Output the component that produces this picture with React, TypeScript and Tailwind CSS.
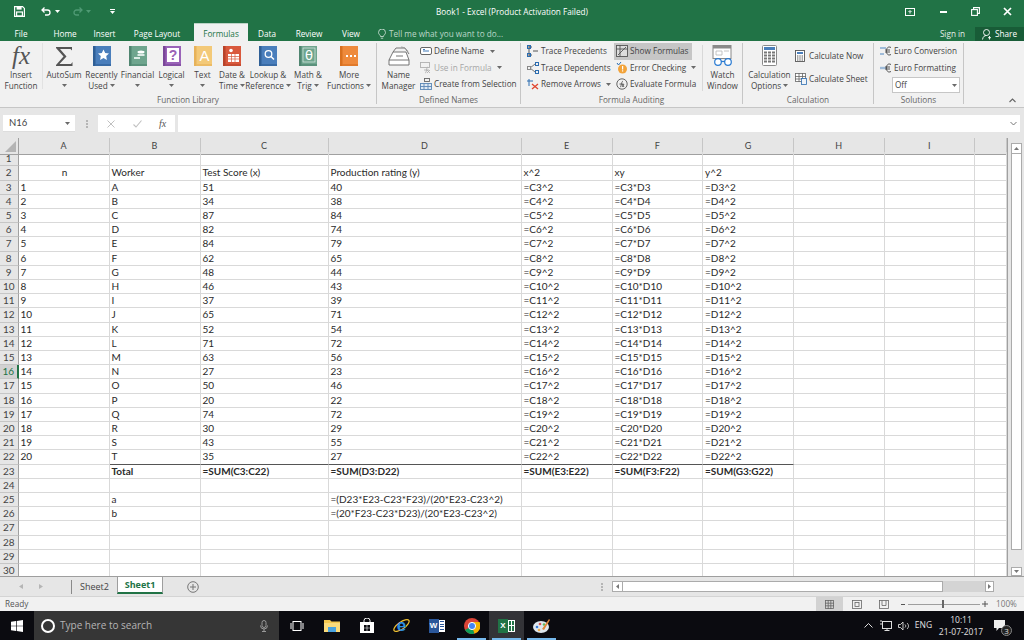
import React from "react";

const scores = [51, 34, 87, 82, 84, 62, 48, 46, 37, 65, 52, 71, 63, 27, 50, 20, 74, 30, 43, 35];
const ratings = [40, 38, 84, 74, 79, 65, 44, 43, 39, 71, 54, 72, 56, 23, 46, 22, 72, 29, 55, 27];
const columns = ["A", "B", "C", "D", "E", "F", "G", "H", "I", ""];

function cellsForRow(r: number): string[] {
  const blank = ["", "", "", "", "", "", "", "", "", ""];
  if (r === 2) return ["n", "Worker", "Test Score (x)", "Production rating (y)", "x^2", "xy", "y^2", "", "", ""];
  if (r >= 3 && r <= 22) {
    const i = r - 3;
    return [
      String(i + 1),
      String.fromCharCode(65 + i),
      String(scores[i]),
      String(ratings[i]),
      `=C${r}^2`,
      `=C${r}*D${r}`,
      `=D${r}^2`,
      "",
      "",
      "",
    ];
  }
  if (r === 23) return ["", "Total", "=SUM(C3:C22)", "=SUM(D3:D22)", "=SUM(E3:E22)", "=SUM(F3:F22)", "=SUM(G3:G22)", "", "", ""];
  if (r === 25) return ["", "a", "", "=(D23*E23-C23*F23)/(20*E23-C23^2)", "", "", "", "", "", ""];
  if (r === 26) return ["", "b", "", "=(20*F23-C23*D23)/(20*E23-C23^2)", "", "", "", "", "", ""];
  return blank;
}

function Caret({ className = "" }: { className?: string }) {
  return (
    <svg width="5" height="3" viewBox="0 0 5 3" className={`inline-block shrink-0 ${className}`}>
      <path d="M0 0h5L2.5 3z" fill="#6a6a6a" />
    </svg>
  );
}

function Book({ color, spine, children }: { color: string; spine: string; children?: React.ReactNode }) {
  return (
    <svg width="18" height="20" viewBox="0 0 18 20">
      <rect x="0" y="0" width="18" height="20" fill={color} />
      <rect x="0" y="0" width="2.5" height="20" fill={spine} />
      <rect x="2.5" y="18" width="15.5" height="2" fill={spine} opacity="0.6" />
      {children}
    </svg>
  );
}

function LargeBtn({
  icon,
  line1,
  line2,
  caret,
  className,
}: {
  icon: React.ReactNode;
  line1: string;
  line2?: string;
  caret?: boolean;
  className: string;
}) {
  return (
    <div className={`flex flex-col items-center shrink-0 ${className}`}>
      <div className="h-[26px] flex items-center justify-center">{icon}</div>
      <div className="h-[11px] leading-[11px] whitespace-nowrap">{line1}</div>
      <div className="h-[11px] leading-[11px] whitespace-nowrap flex items-center gap-[2px]">
        {line2 ? <span>{line2}</span> : null}
        {caret ? <Caret /> : null}
      </div>
    </div>
  );
}

function SmallBtn({
  icon,
  label,
  caret,
  dim,
  className = "",
}: {
  icon: React.ReactNode;
  label: string;
  caret?: boolean;
  dim?: boolean;
  className?: string;
}) {
  return (
    <div className={`h-[16.5px] flex items-center whitespace-nowrap ${dim ? "text-[#a6a6a6]" : ""} ${className}`}>
      <span className="w-[14px] h-[12px] flex items-center justify-start shrink-0">{icon}</span>
      <span>{label}</span>
      {caret ? <Caret className="ml-[5px]" /> : null}
    </div>
  );
}

function Group({ label, className, children }: { label: string; className: string; children: React.ReactNode }) {
  return (
    <div className={`flex flex-col shrink-0 border-r border-[#c6c6c6] ${className}`}>
      <div className="h-[52px] flex">{children}</div>
      <div className="h-[9px] leading-[9px] text-center text-[#666666]">{label}</div>
    </div>
  );
}

const Ic = {
  trace: (
    <svg width="12" height="12" viewBox="0 0 12 12" fill="none" stroke="#2b6cb0" strokeWidth="1">
      <path d="M2 1v10M2 2h3M2 10h3M6 6h5" stroke="#555" />
      <rect x="0.5" y="0.5" width="3" height="3" />
      <rect x="0.5" y="8.5" width="3" height="3" />
    </svg>
  ),
  dep: (
    <svg width="12" height="12" viewBox="0 0 12 12" fill="none" stroke="#2b6cb0" strokeWidth="1">
      <path d="M3 6l5-4M3 6l5 4" stroke="#777" />
      <rect x="0.5" y="4.5" width="3" height="3" stroke="#888" />
      <rect x="8.5" y="0.5" width="3" height="3" />
      <rect x="8.5" y="8.5" width="3" height="3" />
    </svg>
  ),
  remove: (
    <svg width="12" height="12" viewBox="0 0 12 12" fill="none" stroke="#2b6cb0" strokeWidth="1">
      <path d="M2 1v7M0 3h6" />
      <path d="M5 6l6 5M11 6l-6 5" stroke="#e0452f" strokeWidth="1.3" />
    </svg>
  ),
  show: (
    <svg width="12" height="12" viewBox="0 0 12 12" fill="none" stroke="#555" strokeWidth="0.9">
      <rect x="0.5" y="0.5" width="11" height="11" fill="#ddd" />
      <path d="M0 4h12M4 0v12M2 10l8-8" />
    </svg>
  ),
  error: (
    <svg width="12" height="12" viewBox="0 0 12 12">
      <path d="M1 1l1.5 2L5 0" fill="none" stroke="#2b6cb0" strokeWidth="1" />
      <circle cx="6.5" cy="7" r="4.5" fill="#f2a33a" />
      <rect x="6" y="4" width="1.2" height="3.5" fill="#fff" />
      <rect x="6" y="8.3" width="1.2" height="1.2" fill="#fff" />
    </svg>
  ),
  evalF: (
    <svg width="12" height="12" viewBox="0 0 12 12" fill="none" stroke="#555" strokeWidth="0.9">
      <circle cx="6" cy="6" r="5.2" />
      <path d="M4 9c1.5 0 1-5 3-6M3.5 6h4M6 6l2 3M8 6l-2 3" />
    </svg>
  ),
  define: (
    <svg width="12" height="10" viewBox="0 0 12 10" fill="none" stroke="#555" strokeWidth="0.9">
      <rect x="0.5" y="1.5" width="11" height="7" rx="1.5" fill="#fff" />
      <path d="M3 5h6M3 3.5h2" stroke="#2b6cb0" />
    </svg>
  ),
  use: (
    <svg width="12" height="12" viewBox="0 0 12 12" fill="none" stroke="#b0b0b0" strokeWidth="0.9">
      <rect x="0.5" y="0.5" width="9" height="5" />
      <path d="M5 11c2 0 1-6 3-6M4 8h5M7 8l3 3M10 8l-3 3" />
    </svg>
  ),
  create: (
    <svg width="12" height="12" viewBox="0 0 12 12" fill="none" stroke="#5b87b5" strokeWidth="0.9">
      <rect x="0.5" y="5.5" width="11" height="6" fill="#dfe9f3" />
      <path d="M4 5.5v6M8 5.5v6M0 8.5h12" />
      <rect x="4.5" y="0.5" width="5" height="3" stroke="#666" />
    </svg>
  ),
  calcNow: (
    <svg width="10" height="12" viewBox="0 0 10 12" fill="none" stroke="#555" strokeWidth="0.9">
      <rect x="0.5" y="0.5" width="9" height="11" fill="#fff" />
      <rect x="2" y="2" width="6" height="2" fill="#4a7ebb" stroke="none" />
      <path d="M2 6h1.4M4.3 6h1.4M6.6 6h1.4M2 8h1.4M4.3 8h1.4M6.6 8h1.4M2 10h1.4M4.3 10h1.4M6.6 10h1.4" strokeWidth="1.2" />
    </svg>
  ),
  calcSheet: (
    <svg width="12" height="12" viewBox="0 0 12 12" fill="none" stroke="#666" strokeWidth="0.8">
      <rect x="0.5" y="0.5" width="10" height="8" fill="#fff" />
      <path d="M0 3.5h11M0 6h11M4 0v9M7.5 0v9" />
      <rect x="6.5" y="5.5" width="5" height="6" fill="#eef3f8" stroke="#2b6cb0" />
    </svg>
  ),
  euroA: (
    <svg width="12" height="12" viewBox="0 0 12 12" fill="none" strokeWidth="1">
      <path d="M0 3h6" stroke="#9fbbd8" strokeWidth="2" />
      <path d="M0 9h4" stroke="#9fbbd8" strokeWidth="2" />
      <path d="M11 2.5C8 1 6.5 3 6.5 6s1.5 5 4.5 3.5M5 5h5M5 7h5" stroke="#555" />
    </svg>
  ),
  euroB: (
    <svg width="12" height="12" viewBox="0 0 12 12" fill="none" strokeWidth="1">
      <path d="M0 6h7" stroke="#9fbbd8" strokeWidth="2.4" />
      <path d="M11 2.5C8 1 6.5 3 6.5 6s1.5 5 4.5 3.5M5 5h5M5 7h5" stroke="#555" />
    </svg>
  ),
};

function TitleBar() {
  return (
    <div className="h-[23px] shrink-0 bg-[#217346] grid grid-cols-[1fr_auto_1fr] items-center text-white">
      <div className="flex items-center">
        <span className="w-[38px] flex justify-center">
          <svg width="11" height="11" viewBox="0 0 11 11" fill="none" stroke="#fff" strokeWidth="1.2">
            <path d="M.6.6h8l1.8 1.8v8H.6z" />
            <rect x="2.6" y="1" width="5" height="2.6" fill="#fff" stroke="none" />
            <rect x="2.6" y="6" width="5.8" height="4" />
          </svg>
        </span>
        <span className="w-[28px] flex items-center justify-center gap-[3px] ml-[-2px]">
          <svg width="11" height="9" viewBox="0 0 11 9" fill="none" stroke="#fff" strokeWidth="1.3">
            <path d="M3.5.5L1 3l2.5 2.5M1 3h5.5a2.5 2.5 0 010 5H4" />
          </svg>
          <svg width="5" height="3" viewBox="0 0 5 3"><path d="M0 0h5L2.5 3z" fill="#fff" /></svg>
        </span>
        <span className="w-[34px] flex items-center justify-center gap-[3px]">
          <svg width="11" height="9" viewBox="0 0 11 9" fill="none" stroke="#4f9a74" strokeWidth="1.3">
            <path d="M7.5.5L10 3 7.5 5.5M10 3H4.5a2.5 2.5 0 000 5H7" />
          </svg>
          <svg width="5" height="3" viewBox="0 0 5 3"><path d="M0 0h5L2.5 3z" fill="#4f9a74" /></svg>
        </span>
        <span className="w-[28px] flex flex-col items-center gap-[1px]">
          <span className="w-[5px] h-[1px] bg-white" />
          <svg width="5" height="3" viewBox="0 0 5 3"><path d="M0 0h5L2.5 3z" fill="#fff" /></svg>
        </span>
      </div>
      <div className="text-[8.2px] leading-[23px] font-['Open_Sans',sans-serif]">Book1 - Excel (Product Activation Failed)</div>
      <div className="flex items-center justify-end">
        <span className="w-[32px] flex justify-center">
          <svg width="10" height="8" viewBox="0 0 10 8" fill="none" stroke="#fff" strokeWidth="1">
            <rect x="0.5" y="0.5" width="9" height="7" />
            <path d="M5 5.5V3M3.5 4L5 2.5 6.5 4" />
          </svg>
        </span>
        <span className="w-[34px] flex justify-center">
          <span className="w-[7px] h-[2px] bg-white" />
        </span>
        <span className="w-[31px] flex justify-center">
          <svg width="9" height="9" viewBox="0 0 9 9" fill="none" stroke="#fff" strokeWidth="1.1">
            <rect x="0.6" y="2.6" width="5.8" height="5.8" />
            <path d="M2.6 2.5V.6h5.8v5.8H6.5" />
          </svg>
        </span>
        <span className="w-[33px] flex justify-center">
          <svg width="9" height="9" viewBox="0 0 9 9" stroke="#fff" strokeWidth="1.7">
            <path d="M1 1l7 7M8 1L1 8" />
          </svg>
        </span>
      </div>
    </div>
  );
}

function TabRow() {
  const tabs: [string, string][] = [
    ["Home", "w-[46px]"],
    ["Insert", "w-[33px]"],
    ["Page Layout", "w-[72px]"],
  ];
  return (
    <div className="h-[18px] shrink-0 bg-[#217346] flex items-end text-white text-[8.2px] font-['Open_Sans',sans-serif]">
      <div className="w-[42px] h-[14px] leading-[14px] text-center">File</div>
      {tabs.map(([t, w]) => (
        <div key={t} className={`${w} h-[14px] leading-[14px] text-center`}>{t}</div>
      ))}
      <div className="w-[54px] h-[18px] leading-[19px] pt-[0px] text-center bg-[#f1f1f1] text-[#217346] ml-[1px] border-t border-[#bcd3c6]">Formulas</div>
      <div className="w-[38px] h-[14px] leading-[14px] text-center">Data</div>
      <div className="w-[46px] h-[14px] leading-[14px] text-center">Review</div>
      <div className="w-[38px] h-[14px] leading-[14px] text-center">View</div>
      <div className="h-[14px] leading-[14px] flex items-center gap-[3px] text-[#bcd7c8] ml-[8px]">
        <svg width="8" height="10" viewBox="0 0 8 10" fill="none" stroke="#d7e7de" strokeWidth="0.8">
          <path d="M2.5 7.5C2.5 6 .5 5.500 .5 3.500a3.500 3.500 0 017 0C7.500 5.500 5.500 6 5.500 7.500zM2.800 9.200h2.400" />
        </svg>
        <span>Tell me what you want to do...</span>
      </div>
      <div className="ml-auto h-[14px] leading-[14px] w-[45px] text-center text-[#e4efe9]">Sign in</div>
      <div className="h-[14px] leading-[14px] w-[49px] bg-[#185c37] flex items-center justify-center gap-[3px]">
        <svg width="10" height="11" viewBox="0 0 10 11" fill="none" stroke="#fff" strokeWidth="0.9">
          <circle cx="4.500" cy="3.500" r="3" />
          <path d="M.5 10.500c.5-3 2-4 4-4M7.500 7v3.500M6 8.700h3" />
        </svg>
        <span>Share</span>
      </div>
    </div>
  );
}

function Ribbon() {
  return (
    <div className="h-[67px] shrink-0 bg-[#f1f1f1] border-b border-[#c6c6c6] flex pt-[2px] text-[8.2px] text-[#444444] font-['Open_Sans',sans-serif]">
      <Group label="Function Library" className="w-[377px] h-[61px]">
        <LargeBtn
          className="w-[43px] border-r border-[#e2e2e2] h-[46px]"
          icon={<span className="text-[25px] leading-[26px] italic text-[#555555] font-['Liberation_Serif',serif]">fx</span>}
          line1="Insert"
          line2="Function"
        />
        <LargeBtn
          className="w-[38px] ml-[2px]"
          icon={
            <svg width="18" height="21" viewBox="0 0 18 21">
              <path d="M1 1h16v3.500L15.500 3H5l6.500 7.500L4.500 18H16l1.500-2v4H1v-1l7.500-8.500L1 2z" fill="#555555" />
            </svg>
          }
          line1="AutoSum"
          caret
        />
        <LargeBtn
          className="w-[37px]"
          icon={
            <Book color="#4a7ebb" spine="#2f5f96">
              <rect x="5" y="3" width="11" height="11" fill="#4a7ebb" />
              <path d="M10.500 3.500l1.700 3.500 3.800.5-2.800 2.600.7 3.800-3.400-1.900-3.400 1.900.7-3.800-2.800-2.600 3.800-.5z" fill="#fff" />
            </Book>
          }
          line1="Recently"
          line2="Used"
          caret
        />
        <LargeBtn
          className="w-[35px]"
          icon={
            <Book color="#6fa58e" spine="#4f8570">
              <ellipse cx="12" cy="6" rx="3.500" ry="1.500" fill="#fff" />
              <rect x="8.500" y="8" width="7" height="2" fill="#dcebe5" />
              <rect x="5" y="11" width="6" height="2" fill="#dcebe5" />
            </Book>
          }
          line1="Financial"
          caret
        />
        <LargeBtn
          className="w-[33px]"
          icon={
            <Book color="#9a63b8" spine="#7a4698">
              <rect x="4" y="2" width="12" height="14" fill="#fff" />
              <text x="10" y="14" fontSize="14" fontWeight="700" textAnchor="middle" fill="#9a63b8" fontFamily="Liberation Sans, sans-serif">?</text>
            </Book>
          }
          line1="Logical"
          caret
        />
        <LargeBtn
          className="w-[29px]"
          icon={
            <Book color="#f3c978" spine="#e7b259">
              <text x="10.500" y="15" fontSize="15" textAnchor="middle" fill="#fff" fontFamily="Liberation Sans, sans-serif">A</text>
            </Book>
          }
          line1="Text"
          caret
        />
        <LargeBtn
          className="w-[30px]"
          icon={
            <Book color="#d9593d" spine="#b8432a">
              <rect x="5" y="8" width="11" height="8" fill="#fff" />
              <path d="M5 10.500h11M5 13h11M8.500 8v8M12 8v8" stroke="#d9593d" strokeWidth="0.7" />
              <circle cx="8" cy="4.500" r="1.800" fill="#fff" />
            </Book>
          }
          line1="Date &"
          line2="Time"
          caret
        />
        <LargeBtn
          className="w-[42px]"
          icon={
            <Book color="#4a7ebb" spine="#2f5f96">
              <circle cx="9.500" cy="8" r="3.300" fill="none" stroke="#fff" strokeWidth="1.300" />
              <path d="M12 10.500l3 3" stroke="#fff" strokeWidth="1.500" />
            </Book>
          }
          line1="Lookup &"
          line2="Reference"
          caret
        />
        <LargeBtn
          className="w-[38px]"
          icon={
            <Book color="#6fa58e" spine="#4f8570">
              <rect x="4" y="2" width="12" height="14" fill="none" stroke="#dcebe5" strokeWidth="0.7" />
              <text x="10" y="14" fontSize="13" textAnchor="middle" fill="#fff" fontFamily="DejaVu Sans, sans-serif">θ</text>
            </Book>
          }
          line1="Math &"
          line2="Trig"
          caret
        />
        <LargeBtn
          className="w-[44px]"
          icon={
            <Book color="#ee8a3c" spine="#d8701f">
              <rect x="6" y="9" width="2" height="2" fill="#fff" />
              <rect x="10" y="9" width="2" height="2" fill="#fff" />
              <rect x="14" y="9" width="2" height="2" fill="#fff" />
            </Book>
          }
          line1="More"
          line2="Functions"
          caret
        />
      </Group>
      <Group label="Defined Names" className="w-[144px] h-[61px]">
        <LargeBtn
          className="w-[41px] ml-[1px]"
          icon={
            <svg width="22" height="20" viewBox="0 0 22 20" fill="none" stroke="#666" strokeWidth="0.9">
              <path d="M1 14l4-8h13l3 8v5H1z" fill="#fff" />
              <path d="M1 14h20" />
              <path d="M5 6l3-4h9l4 6M8 10h7" />
              <path d="M13 1c3 0 6 2 7 5" stroke="#999" />
            </svg>
          }
          line1="Name"
          line2="Manager"
        />
        <div className="flex flex-col ml-[1px]">
          <SmallBtn icon={Ic.define} label="Define Name" caret className="[&>svg]:ml-[6px]" />
          <SmallBtn icon={Ic.use} label="Use in Formula" dim caret />
          <SmallBtn icon={Ic.create} label="Create from Selection" />
        </div>
      </Group>
      <Group label="Formula Auditing" className="w-[222px] h-[61px]">
        <div className="w-[93px] flex flex-col pl-[6px]">
          <SmallBtn icon={Ic.trace} label="Trace Precedents" />
          <SmallBtn icon={Ic.dep} label="Trace Dependents" />
          <SmallBtn icon={Ic.remove} label="Remove Arrows" caret />
        </div>
        <div className="w-[88px] flex flex-col">
          <SmallBtn icon={Ic.show} label="Show Formulas" className="bg-[#c6c6c6] w-[78px] pl-[2px]" />
          <SmallBtn icon={Ic.error} label="Error Checking" caret className="pl-[2px]" />
          <SmallBtn icon={Ic.evalF} label="Evaluate Formula" className="pl-[2px]" />
        </div>
        <LargeBtn
          className="w-[40px] border-l border-[#d8d8d8] h-[46px] mt-[2px]"
          icon={
            <svg width="22" height="22" viewBox="0 0 22 22" fill="none" className="mt-[-2px]">
              <rect x="1" y="0.500" width="18" height="13" fill="#fff" stroke="#8a8a8a" />
              <rect x="1" y="0.500" width="18" height="3" fill="#8a8a8a" />
              <path d="M4 6h6v4H4zM12 6h5" stroke="#b5b5b5" strokeWidth="0.8" />
              <circle cx="6" cy="17" r="3.300" fill="#fff" stroke="#2b7cd3" strokeWidth="1.200" />
              <circle cx="16" cy="17" r="3.300" fill="#fff" stroke="#2b7cd3" strokeWidth="1.200" />
              <path d="M9 16.500h4" stroke="#2b7cd3" strokeWidth="1.200" />
            </svg>
          }
          line1="Watch"
          line2="Window"
        />
      </Group>
      <Group label="Calculation" className="w-[131px] h-[61px]">
        <LargeBtn
          className="w-[45px] ml-[4px]"
          icon={
            <svg width="15" height="21" viewBox="0 0 15 21" fill="none" className="mt-[-1px]">
              <rect x="0.500" y="0.500" width="14" height="20" rx="1" fill="#fff" stroke="#8a8a8a" />
              <rect x="2" y="2" width="11" height="3" fill="#4a7ebb" />
              <path d="M2 7.500h3M6 7.500h3M10 7.500h3M2 10.500h3M6 10.500h3M10 10.500h3M2 13.500h3M6 13.500h3M10 13.500h3M2 16.500h3M6 16.500h3M10 16.500h3" stroke="#777" strokeWidth="2" />
            </svg>
          }
          line1="Calculation"
          line2="Options"
          caret
        />
        <div className="flex flex-col ml-[3px] pt-[5px] gap-[6px]">
          <SmallBtn icon={Ic.calcNow} label="Calculate Now" />
          <SmallBtn icon={Ic.calcSheet} label="Calculate Sheet" />
        </div>
      </Group>
      <Group label="Solutions" className="w-[90px] h-[61px]">
        <div className="flex flex-col pl-[6px]">
          <SmallBtn icon={Ic.euroA} label="Euro Conversion" />
          <SmallBtn icon={Ic.euroB} label="Euro Formatting" />
          <div className="ml-[12px] mt-[1px] w-[68px] h-[16px] bg-white border border-[#c6c6c6] flex items-center justify-between px-[2px]">
            <span>Off</span>
            <Caret />
          </div>
        </div>
      </Group>
      <div className="flex-1 flex items-end justify-end pr-[8px] pb-[4px]">
        <svg width="7" height="5" viewBox="0 0 7 5" fill="none" stroke="#666" strokeWidth="1.100">
          <path d="M.5 4l3-3 3 3" />
        </svg>
      </div>
    </div>
  );
}

function FormulaBar() {
  return (
    <div className="h-[30px] shrink-0 bg-[#e6e6e6] flex items-start pt-[7px] pl-[3px] text-[#444444] font-['Lato',sans-serif]">
      <div className="w-[72px] h-[17px] bg-white border-b border-[#dddddd] flex items-center justify-between pl-[6px] pr-[5px] text-[9.500px]">
        <span>N16</span>
        <Caret />
      </div>
      <div className="w-[23px] h-[17px] flex items-center justify-center">
        <span className="w-[2px] h-[8px] border-l-2 border-dotted border-[#b5b5b5]" />
      </div>
      <div className="w-[77px] h-[17px] bg-white flex items-center">
        <span className="w-[26px] flex justify-center">
          <svg width="8" height="8" viewBox="0 0 8 8" stroke="#c0c0c0" strokeWidth="1"><path d="M.5.5l7 7M7.500.5l-7 7" /></svg>
        </span>
        <span className="w-[26px] flex justify-center">
          <svg width="9" height="8" viewBox="0 0 9 8" fill="none" stroke="#c0c0c0" strokeWidth="1.100"><path d="M.5 4.500L3 7l5.500-6.500" /></svg>
        </span>
        <span className="w-[25px] text-center text-[10px] italic text-[#555555] font-['Liberation_Serif',serif]">fx</span>
      </div>
      <div className="ml-[3px] w-[842px] h-[17px] bg-white flex items-center justify-end pr-[3px]">
        <svg width="7" height="5" viewBox="0 0 7 5" fill="none" stroke="#777" strokeWidth="1"><path d="M.5 1l3 3 3-3" /></svg>
      </div>
    </div>
  );
}

function Sheet() {
  const rows = Array.from({ length: 30 }, (_, i) => i + 1);
  return (
    <div className="flex-1 min-w-0 overflow-hidden text-[10px] text-[#2a2a2a] font-['Lato',sans-serif]">
      <div className="grid grid-cols-[18.500px_91px_91px_128px_193px_91px_90.500px_91px_90.500px_90.500px_32px] auto-rows-[14.210px]">
        <div className="h-[16.500px] bg-[#e6e6e6] border-b border-r border-[#a0a0a0] relative overflow-hidden">
          <svg width="18" height="16" viewBox="0 0 18 16" className="absolute inset-0">
            <path d="M16 3v11H5z" fill="#b4b4b4" />
          </svg>
        </div>
        {columns.map((c, i) => (
          <div key={i} className="h-[16.500px] bg-[#e6e6e6] border-b border-r border-b-[#a0a0a0] border-r-[#c6c6c6] text-center leading-[15px] text-[#444444] text-[9px]">
            {c}
          </div>
        ))}
        {rows.map((r) => {
          const vals = cellsForRow(r);
          const bold = r === 23;
          return (
            <React.Fragment key={r}>
              <div
                className={
                  r === 16
                    ? "bg-[#d2d2d2] border-b border-r-2 border-b-[#c6c6c6] border-r-[#217346] text-center leading-[13px] text-[#217346]"
                    : "bg-[#e6e6e6] border-b border-r border-b-[#c6c6c6] border-r-[#a0a0a0] text-center leading-[13px] text-[#444444]"
                }
              >
                {r}
              </div>
              {vals.map((v, i) => (
                <div
                  key={i}
                  className={`border-r border-b border-r-[#d9d9d9] ${r === 22 && i >= 1 && i <= 6 ? "border-b-[#555555]" : "border-b-[#d9d9d9]"} pl-[2px] leading-[13px] whitespace-nowrap ${bold ? "font-bold" : ""} ${r === 2 && i === 0 ? "text-center" : ""}`}
                >
                  {v}
                </div>
              ))}
            </React.Fragment>
          );
        })}
      </div>
    </div>
  );
}

function VScroll() {
  return (
    <div className="w-[17px] shrink-0 bg-[#e6e6e6] border-l border-[#a0a0a0] flex flex-col items-center pt-[5px] pb-[0px]">
      <div className="w-[11px] h-[11px] bg-white border border-[#ababab] flex items-center justify-center">
        <svg width="5" height="3" viewBox="0 0 5 3"><path d="M2.500 0L5 3H0z" fill="#777" /></svg>
      </div>
      <div className="w-[11px] flex-1 bg-white border-x border-b border-[#ababab]" />
      <div className="w-[11px] h-[9px] mt-[17px] bg-white border border-[#ababab] flex items-center justify-center">
        <svg width="5" height="3" viewBox="0 0 5 3"><path d="M0 0h5L2.500 3z" fill="#777" /></svg>
      </div>
    </div>
  );
}

function SheetTabs() {
  return (
    <div className="h-[20px] shrink-0 bg-[#e6e6e6] border-t border-[#9e9e9e] flex text-[9px] font-['Open_Sans',sans-serif] text-[#444444]">
      <div className="w-[71px] flex items-center">
        <svg width="4" height="5" viewBox="0 0 4 5" className="ml-[19px]"><path d="M4 0v5L0 2.500z" fill="#b5b5b5" /></svg>
        <svg width="4" height="5" viewBox="0 0 4 5" className="ml-[16px]"><path d="M0 0v5l4-2.500z" fill="#b5b5b5" /></svg>
      </div>
      <div className="w-[46px] h-[14px] mt-[3px] leading-[14px] text-center border-l border-[#8a8a8a]">Sheet2</div>
      <div className="w-[46px] h-[17px] leading-[16px] text-center bg-white font-bold text-[#217346] border-b-2 border-x border-x-[#9e9e9e] border-b-[#217346]">Sheet1</div>
      <div className="w-[60px] flex items-center justify-center pr-[0px]">
        <svg width="12" height="12" viewBox="0 0 12 12" fill="none" stroke="#777" strokeWidth="1">
          <circle cx="6" cy="6" r="5.300" />
          <path d="M6 3v6M3 6h6" />
        </svg>
      </div>
      <div className="w-[389px] flex items-center justify-end pr-[9px]">
        <span className="w-[2px] h-[8px] border-l-2 border-dotted border-[#b5b5b5]" />
      </div>
      <div className="h-[11px] mt-[4px] flex">
        <div className="w-[11px] bg-white border border-[#ababab] flex items-center justify-center">
          <svg width="3" height="5" viewBox="0 0 3 5"><path d="M3 0v5L0 2.500z" fill="#777" /></svg>
        </div>
        <div className="w-[320px] bg-white border-y border-r border-[#ababab]" />
        <div className="w-[42px] bg-[#d4d4d4]" />
        <div className="w-[9px] bg-white border border-[#ababab] flex items-center justify-center">
          <svg width="3" height="5" viewBox="0 0 3 5"><path d="M0 0v5l3-2.500z" fill="#777" /></svg>
        </div>
      </div>
    </div>
  );
}

function StatusBar() {
  return (
    <div className="h-[15px] shrink-0 bg-[#f1f1f1] border-t border-[#d4d4d4] flex items-center text-[8.200px] text-[#555555] font-['Open_Sans',sans-serif]">
      <span className="pl-[5px]">Ready</span>
      <div className="ml-auto flex items-center h-full">
        <div className="w-[27px] h-full bg-[#d2d2d2] flex items-center justify-center">
          <svg width="9" height="9" viewBox="0 0 9 9" fill="none" stroke="#666" strokeWidth="0.8">
            <rect x="0.500" y="0.500" width="8" height="8" />
            <path d="M0 3.200h9M0 5.800h9M3.200 0v9M5.800 0v9" />
          </svg>
        </div>
        <div className="w-[27px] flex justify-center">
          <svg width="10" height="9" viewBox="0 0 10 9" fill="none" stroke="#666" strokeWidth="0.8">
            <rect x="0.500" y="0.500" width="9" height="8" />
            <rect x="3" y="2.500" width="4" height="4" />
          </svg>
        </div>
        <div className="w-[27px] flex justify-center">
          <svg width="10" height="9" viewBox="0 0 10 9" fill="none" stroke="#666" strokeWidth="0.8">
            <rect x="0.500" y="0.500" width="9" height="8" />
            <path d="M3 .5v5h4v-5" />
          </svg>
        </div>
        <div className="w-[8px] flex justify-center ml-[2px]"><span className="w-[4px] h-[1px] bg-[#555555]" /></div>
        <div className="w-[72px] h-[9px] mx-[1px] flex items-center relative">
          <span className="w-full h-[1px] bg-[#9e9e9e]" />
          <span className="absolute left-[34px] w-[2px] h-[8px] bg-[#666666]" />
        </div>
        <div className="w-[8px] flex justify-center">
          <svg width="6" height="6" viewBox="0 0 6 6" stroke="#555" strokeWidth="1"><path d="M3 0v6M0 3h6" /></svg>
        </div>
        <span className="w-[35px] text-center text-[#777777]">100%</span>
      </div>
    </div>
  );
}

function TaskSlot({ children, active, running }: { children: React.ReactNode; active?: boolean; running?: boolean }) {
  return (
    <div className={`w-[35px] h-full flex items-center justify-center relative ${active ? "bg-[#333337]" : ""}`}>
      {children}
      {running ? <span className="absolute bottom-0 inset-x-[3px] h-[2px] bg-[#76b9ed]" /> : null}
    </div>
  );
}

function Taskbar() {
  return (
    <div className="h-[29px] shrink-0 bg-[#0b0b10] flex text-white font-['Open_Sans',sans-serif]">
      <div className="w-[34px] flex items-center justify-center">
        <svg width="12" height="12" viewBox="0 0 12 12" fill="#fff">
          <path d="M0 1.700L5 1v4.700H0zM5.700.9L12 0v5.700H5.700zM0 6.300h5V11l-5-.7zM5.700 6.300H12V12l-6.300-.9z" />
        </svg>
      </div>
      <div className="w-[245px] bg-[#363636] flex items-center relative text-[#b5b5b5] text-[10px]">
        <span className="ml-[7px] w-[14px] h-[14px] rounded-full border-2 border-white shrink-0" />
        <span className="ml-[5px]">Type here to search</span>
        <svg width="8" height="12" viewBox="0 0 8 12" fill="none" stroke="#999" strokeWidth="1" className="absolute right-[11px]">
          <rect x="2" y="0.500" width="4" height="7" rx="2" />
          <path d="M.5 5.500a3.500 3.500 0 007 0M4 9v2.500M2 11.500h4" />
        </svg>
      </div>
      <TaskSlot>
        <svg width="14" height="10" viewBox="0 0 14 10" fill="none" stroke="#fff" strokeWidth="1">
          <rect x="3" y="0.500" width="8" height="9" />
          <path d="M1 2v6M13 2v6" />
        </svg>
      </TaskSlot>
      <TaskSlot>
        <svg width="16" height="13" viewBox="0 0 16 13">
          <path d="M0 1h6l1.500 1.500H16V13H0z" fill="#f4c850" />
          <rect x="0" y="4" width="16" height="9" fill="#fbdc7c" />
          <rect x="4" y="8" width="8" height="5" fill="#4aa3df" />
        </svg>
      </TaskSlot>
      <TaskSlot>
        <svg width="14" height="15" viewBox="0 0 14 15">
          <path d="M4 4V2.500a3 2.500 0 016 0V4" fill="none" stroke="#fff" strokeWidth="1" />
          <rect x="0" y="4" width="14" height="11" fill="#fff" />
          <path d="M4 7h2.700v2.700H4zM7.300 7H10v2.700H7.300zM4 10.300h2.700V13H4zM7.300 10.300H10V13H7.300z" fill="#0b0b10" />
        </svg>
      </TaskSlot>
      <TaskSlot>
        <svg width="17" height="17" viewBox="0 0 17 17">
          <ellipse cx="8.500" cy="8.500" rx="9" ry="3.500" fill="none" stroke="#f2c230" strokeWidth="1.200" transform="rotate(-35 8.500 8.500)" />
          <text x="8.500" y="14" fontSize="17" fontWeight="700" textAnchor="middle" fill="#2b8fe0" fontFamily="Liberation Sans, sans-serif">e</text>
        </svg>
      </TaskSlot>
      <TaskSlot>
        <div className="flex items-center">
          <div className="w-[10px] h-[14px] bg-[#2b579a] text-white text-[8px] font-bold leading-[14px] text-center font-['Liberation_Sans',sans-serif]">W</div>
          <div className="w-[6px] h-[12px] bg-white flex flex-col justify-around py-[1px] pl-[1px] pr-[1px]">
            <span className="h-[1px] bg-[#2b579a]" />
            <span className="h-[1px] bg-[#2b579a]" />
            <span className="h-[1px] bg-[#2b579a]" />
            <span className="h-[1px] bg-[#2b579a]" />
          </div>
        </div>
      </TaskSlot>
      <TaskSlot running>
        <svg width="16" height="16" viewBox="0 0 16 16">
          <circle cx="8" cy="8" r="8" fill="#db4437" />
          <path d="M8 8L1 12a8 8 0 009.500 3.600z" fill="#0f9d58" />
          <path d="M8 4h7.500A8 8 0 0110.500 15.600L8 8z" fill="#f4b400" />
          <circle cx="8" cy="8" r="3.600" fill="#4285f4" stroke="#fff" strokeWidth="1" />
        </svg>
      </TaskSlot>
      <TaskSlot active running>
        <div className="flex items-center">
          <div className="w-[10px] h-[14px] bg-[#217346] text-white text-[8px] font-bold leading-[14px] text-center font-['Liberation_Sans',sans-serif]">X</div>
          <div className="w-[7px] h-[12px] bg-white grid grid-cols-2 gap-[1px] p-[1px]">
            <span className="bg-[#217346]" />
            <span className="bg-[#217346]" />
            <span className="bg-[#217346]" />
            <span className="bg-[#217346]" />
          </div>
        </div>
      </TaskSlot>
      <TaskSlot running>
        <svg width="18" height="16" viewBox="0 0 18 16">
          <ellipse cx="8" cy="9" rx="8" ry="6" fill="#dfe7ee" />
          <circle cx="4" cy="9" r="1.300" fill="#3a7bd5" />
          <circle cx="7" cy="6" r="1.300" fill="#d9534f" />
          <circle cx="11" cy="6.500" r="1.300" fill="#5cb85c" />
          <circle cx="6" cy="12" r="1.300" fill="#f0ad4e" />
          <path d="M9 11L16 1l1 1-6 10z" fill="#e0873a" />
        </svg>
      </TaskSlot>
      <div className="ml-auto flex items-center h-full text-[#e0e0e0]">
        <div className="w-[17px] flex justify-center">
          <svg width="9" height="5" viewBox="0 0 9 5" fill="none" stroke="#ddd" strokeWidth="1"><path d="M.5 4.500l4-4 4 4" /></svg>
        </div>
        <div className="w-[18px] flex justify-center">
          <svg width="12" height="11" viewBox="0 0 12 11" fill="none" stroke="#ddd" strokeWidth="1">
            <rect x="2.500" y="1.500" width="9" height="7" />
            <path d="M0 1h2M0 4h2M7 8.500V10.500M4.500 10.500h5" />
          </svg>
        </div>
        <div className="w-[17px] flex justify-center">
          <svg width="12" height="10" viewBox="0 0 12 10" fill="none" stroke="#ddd" strokeWidth="0.900">
            <path d="M.5 3.500h2L5 1v8L2.500 6.500h-2zM7 3.500c1 1 1 2 0 3M9 2c2 2 2 4 0 6" />
          </svg>
        </div>
        <div className="w-[23px] text-center text-[8.500px]">ENG</div>
        <div className="w-[52px] text-center text-[8.500px] leading-[12px]">
          <div>10:11</div>
          <div>21-07-2017</div>
        </div>
        <div className="w-[37px] pl-[7px] flex items-center relative h-full">
          <svg width="11" height="11" viewBox="0 0 11 11" fill="#eee"><path d="M0 0h11v8H5L2.500 11V8H0z" /></svg>
          <span className="absolute left-[14px] top-[14px] w-[11px] h-[11px] rounded-full bg-[#222222] border border-[#888888] text-[8px] leading-[9px] text-center">3</span>
        </div>
      </div>
    </div>
  );
}

export default function App() {
  return (
    <div className="w-[1024px] h-[640px] overflow-hidden flex flex-col bg-white">
      <TitleBar />
      <TabRow />
      <Ribbon />
      <FormulaBar />
      <div className="flex-1 min-h-0 flex">
        <Sheet />
        <VScroll />
      </div>
      <SheetTabs />
      <StatusBar />
      <Taskbar />
    </div>
  );
}
